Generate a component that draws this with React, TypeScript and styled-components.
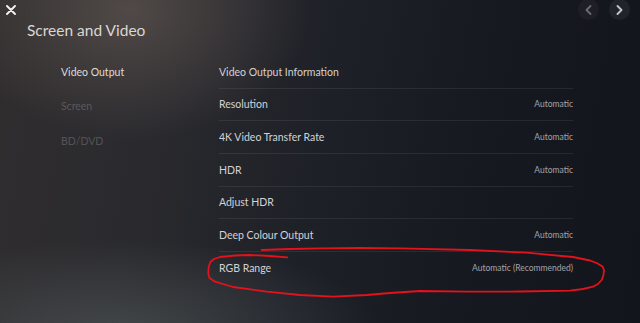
import React from "react";
import styled, { createGlobalStyle } from "styled-components";

const Global = createGlobalStyle`
  html, body { margin: 0; padding: 0; background: #15171e; }
  * { box-sizing: border-box; }
`;

const Page = styled.div`
  position: relative;
  width: 640px;
  height: 323px;
  overflow: hidden;
  font-family: Lato, "Open Sans", sans-serif;
  background:
    radial-gradient(ellipse 180px 130px at 130px 10px, rgba(125, 110, 100, 0.45), rgba(125, 110, 100, 0) 100%),
    radial-gradient(ellipse 260px 90px at 120px 330px, rgba(95, 105, 105, 0.45), rgba(95, 105, 105, 0) 100%),
    linear-gradient(100deg, #302d2e 0%, #2a2a2e 25%, #1f2128 48%, #171920 72%, #13151d 100%);
`;

const TopBar = styled.div`
  display: flex;
  justify-content: space-between;
  align-items: flex-start;
  height: 20px;
  padding: 0 0 0 5px;
`;

const CloseBtn = styled.div`
  width: 11px;
  height: 11px;
  margin-top: 4px;
  display: flex;
  align-items: center;
  justify-content: center;
`;

const NavGroup = styled.div`
  display: flex;
  gap: 10px;
  margin-right: 10px;
  margin-top: -1px;
`;

const NavBtn = styled.div<{ $active?: boolean }>`
  width: 21px;
  height: 21px;
  border-radius: 50%;
  background: ${(p) => (p.$active ? "rgba(255,255,255,0.06)" : "rgba(255,255,255,0.035)")};
  display: flex;
  align-items: center;
  justify-content: center;
  color: ${(p) => (p.$active ? "#c4c6cc" : "#6a6c74")};
`;

const Title = styled.h1`
  margin: 0 0 0 27px;
  font-weight: 400;
  font-size: 15.5px;
  line-height: 20px;
  color: #d9d6d3;
`;

const Body = styled.div`
  display: grid;
  grid-template-columns: 158px 354px;
  padding-left: 61px;
  margin-top: 16px;
`;

const SideNav = styled.div`
  display: flex;
  flex-direction: column;
  margin-top: -1.5px;
`;

const SideItem = styled.div<{ $active?: boolean }>`
  height: 34.5px;
  display: flex;
  align-items: center;
  font-size: 10.5px;
  color: ${(p) => (p.$active ? "#dcdcdc" : "rgba(255,255,255,0.2)")};
`;

const List = styled.div`
  display: flex;
  flex-direction: column;
`;

const Row = styled.div<{ $last?: boolean }>`
  height: 32.67px;
  display: flex;
  align-items: center;
  justify-content: space-between;
  border-bottom: 1px solid ${(p) => (p.$last ? "transparent" : "rgba(255,255,255,0.075)")};
`;

const Label = styled.span`
  font-size: 10.5px;
  color: #d2d2d6;
`;

const Value = styled.span`
  font-size: 8.5px;
  color: #a2a4aa;
`;

const Annotation = styled.svg`
  position: absolute;
  left: 0;
  top: 0;
  pointer-events: none;
`;

const rows: [string, string][] = [
  ["Video Output Information", ""],
  ["Resolution", "Automatic"],
  ["4K Video Transfer Rate", "Automatic"],
  ["HDR", "Automatic"],
  ["Adjust HDR", ""],
  ["Deep Colour Output", "Automatic"],
  ["RGB Range", "Automatic (Recommended)"],
];

const redPoints =
  "261.7,250 290,249 320,248.3 360,248 400,248.3 470,250 526.7,252.7 573,257 590,260.5 596.7,263 602.5,266.5 604,270 603.5,275 601.7,280 598,284 593,286.7 583,289 570,290.7 520,291.5 466.7,291.7 420,291 390,293 366.7,295 333,296.7 300,295 266.7,291.7 233,287 215,281.7 209.5,278 208.3,274 208.6,267 210.5,261.7 214,259 220,257 235,255.5 250,255 270,256 287.3,257.3";

export default function App() {
  return (
    <Page>
      <Global />
      <TopBar>
        <CloseBtn>
          <svg width="10" height="10" viewBox="0 0 10 10">
            <path d="M1 1 L9 9 M9 1 L1 9" stroke="#f2f2f2" strokeWidth="1.9" strokeLinecap="round" />
          </svg>
        </CloseBtn>
        <NavGroup>
          <NavBtn>
            <svg width="7" height="10" viewBox="0 0 7 10">
              <path d="M5.5 1 L1.5 5 L5.5 9" stroke="currentColor" strokeWidth="1.8" fill="none" strokeLinecap="round" strokeLinejoin="round" />
            </svg>
          </NavBtn>
          <NavBtn $active>
            <svg width="7" height="10" viewBox="0 0 7 10">
              <path d="M1.5 1 L5.5 5 L1.5 9" stroke="currentColor" strokeWidth="1.8" fill="none" strokeLinecap="round" strokeLinejoin="round" />
            </svg>
          </NavBtn>
        </NavGroup>
      </TopBar>
      <Title>Screen and Video</Title>
      <Body>
        <SideNav>
          <SideItem $active>Video Output</SideItem>
          <SideItem>Screen</SideItem>
          <SideItem>BD/DVD</SideItem>
        </SideNav>
        <List>
          {rows.map(([l, v], i) => (
            <Row key={l} $last={i === rows.length - 1}>
              <Label>{l}</Label>
              {v && <Value>{v}</Value>}
            </Row>
          ))}
        </List>
      </Body>
      <Annotation width="640" height="323" viewBox="0 0 640 323">
        <polyline points={redPoints} fill="none" stroke="#e3121b" strokeWidth="1.8" strokeLinejoin="round" strokeLinecap="round" />
      </Annotation>
    </Page>
  );
}
